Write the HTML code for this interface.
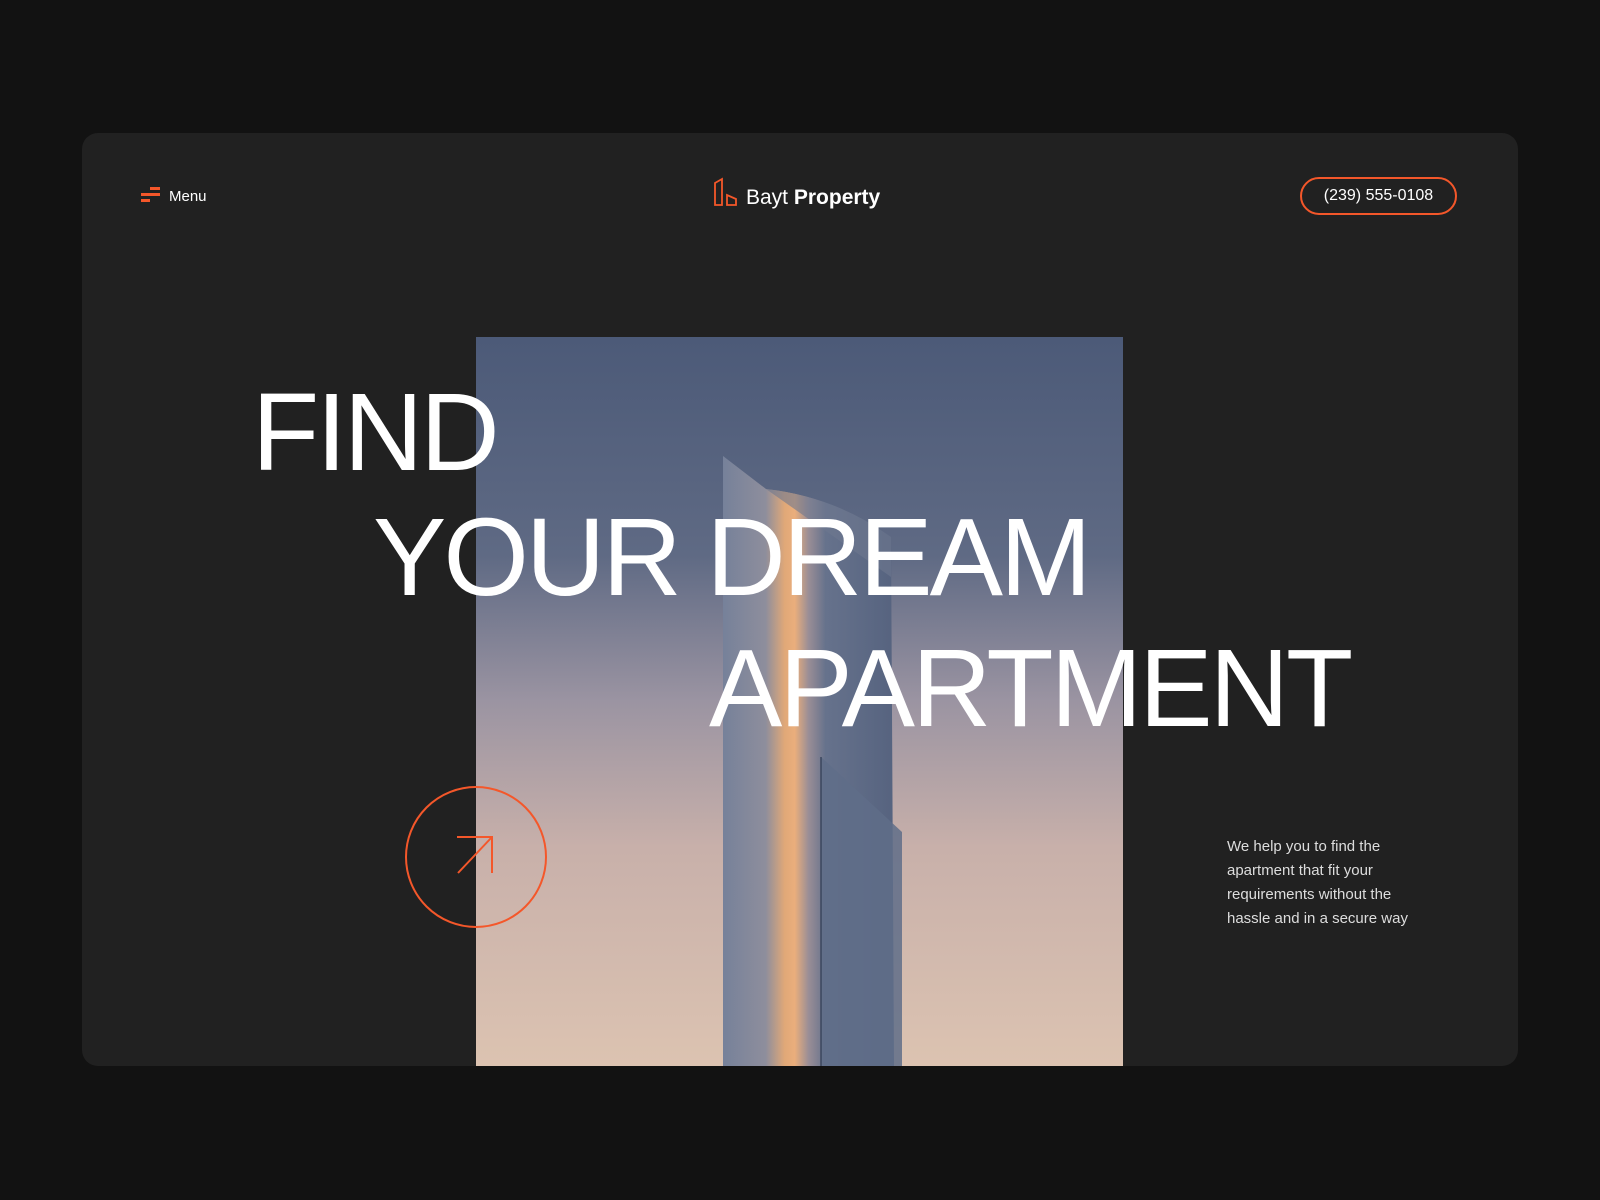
<!DOCTYPE html>
<html><head><style>
*{margin:0;padding:0;box-sizing:border-box}
body{width:1600px;height:1200px;background:#121212;font-family:"Liberation Sans",sans-serif;position:relative;overflow:hidden}
.card{position:absolute;left:82px;top:133px;width:1436px;height:933px;background:#212121;border-radius:16px;overflow:hidden}
.abs{position:absolute}
.h{color:#fff;font-size:110px;letter-spacing:-3px;line-height:1;position:absolute;white-space:nowrap}
</style></head><body>
<div class="card"></div>
<svg class="abs" style="left:476px;top:337px" width="647" height="729" viewBox="0 0 647 729">
<defs>
<linearGradient id="sky" x1="0" y1="0" x2="0" y2="1">
<stop offset="0" stop-color="#4c5a78"/><stop offset="0.3" stop-color="#5f6a84"/><stop offset="0.5" stop-color="#9b94a2"/><stop offset="0.7" stop-color="#c8b0aa"/><stop offset="1" stop-color="#dcc3b1"/></linearGradient>
<linearGradient id="tw" x1="0" y1="0" x2="1" y2="0">
<stop offset="0" stop-color="#76819a"/><stop offset="0.25" stop-color="#8e8e9c"/><stop offset="0.36" stop-color="#e0a878"/><stop offset="0.42" stop-color="#eaae7c"/><stop offset="0.5" stop-color="#9a8e96"/><stop offset="0.6" stop-color="#66728c"/><stop offset="1" stop-color="#56637f"/></linearGradient>
</defs>
<rect width="647" height="729" fill="url(#sky)"/>
<path d="M247 119 L290 152 Q360 160 415 200 L418 729 L247 729 Z" fill="url(#tw)"/>
<path d="M345 420 L426 495 L426 729 L345 729 Z" fill="#5f6d88" opacity="0.85"/>
<path d="M345 420 L345 729" stroke="#3b465e" stroke-width="1.5"/>
<path d="M290 152 Q360 160 415 200 L415 240 L290 152Z" fill="#6e7890" opacity="0.6"/>
</svg>
<svg class="abs" style="left:141px;top:187px" width="22" height="18"><rect x="9" y="0" width="10" height="3" fill="#f4572a"/><rect x="0" y="6" width="19" height="3" fill="#f4572a"/><rect x="0" y="12" width="9" height="3" fill="#f4572a"/></svg>
<div class="abs" style="left:169px;top:188px;color:#fff;font-size:15px">Menu</div>
<svg class="abs" style="left:713px;top:177px" width="26" height="30"><path d="M2 28 V6 L9 2 V28 Z M14 28 V18 L23 22 V28 Z" fill="none" stroke="#f4572a" stroke-width="1.8"/></svg>
<div class="abs" style="left:746px;top:186px;color:#fff;font-size:21px">Bayt <b>Property</b></div>
<div class="abs" style="left:1300px;top:177px;width:157px;height:38px;border:2.5px solid #f4572a;border-radius:19px;color:#fff;font-size:16px;text-align:center;line-height:33px">(239) 555-0108</div>
<div class="h" style="left:252px;top:378px">FIND</div>
<div class="h" style="left:373px;top:503px">YOUR DREAM</div>
<div class="h" style="left:709px;top:634px">APARTMENT</div>
<svg class="abs" style="left:404px;top:785px" width="144" height="144"><circle cx="72" cy="72" r="70" fill="none" stroke="#f4572a" stroke-width="2"/><path d="M54 88 L88 52 M53 52 H88 V88" fill="none" stroke="#f4572a" stroke-width="2"/></svg>
<div class="abs" style="left:1227px;top:835px;color:#ddd;font-size:15px;line-height:24px;width:200px">We help you to find the apartment that fit your requirements without the hassle and in a secure way</div>
</body></html>
